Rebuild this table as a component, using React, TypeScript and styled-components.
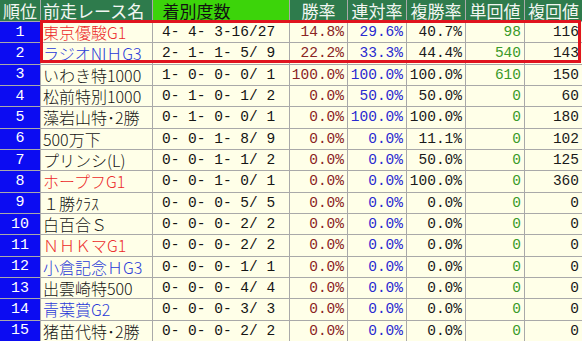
import React from "react";
import styled, { createGlobalStyle } from "styled-components";

const Global = createGlobalStyle`
  html, body { margin: 0; padding: 0; background: #ffffff; }
  #root { width: 582px; }
`;

const NUM_FONT = `"Liberation Mono", "Noto Sans CJK JP", monospace`;
const JP_FONT = `"Noto Sans CJK JP", "Noto Sans", sans-serif`;

const Wrap = styled.div`
  position: relative;
  width: 582px;
  height: 341px;
  overflow: hidden;
`;

const Table = styled.div`
  display: grid;
  grid-template-columns: 40px 111px 136px 57px 58px 58px 58px 57px;
  grid-template-rows: 21px repeat(15, 1fr);
  gap: 1px;
  width: 582px;
  height: 341px;
  background: #a9a9a9;
`;

type HeadTone = "dark" | "bright";

const HeadCell = styled.div<{ $tone: HeadTone; $align: "left" | "center" }>`
  display: flex;
  align-items: center;
  justify-content: ${(p) => (p.$align === "left" ? "flex-start" : "center")};
  padding-left: ${(p) => (p.$align === "left" ? "2px" : "0")};
  background: ${(p) => (p.$tone === "bright" ? "#3cd40a" : "#2e7b4c")};
  color: ${(p) => (p.$tone === "bright" ? "#111111" : "#f2f6f2")};
  font-family: ${JP_FONT};
  font-size: 17px;
  line-height: 20px;
  white-space: pre;
  overflow: hidden;
`;

const RankCell = styled.div`
  display: flex;
  align-items: center;
  justify-content: center;
  background: #0c0cf2;
  color: #ffffff;
  font-family: ${NUM_FONT};
  font-size: 15px;
  line-height: 1;
`;

const BodyCell = styled.div`
  display: flex;
  align-items: center;
  background: #ffffe8;
  white-space: pre;
  line-height: 1;
  overflow: hidden;
`;

type NameTone = "plain" | "red" | "blue";
const nameColors: Record<NameTone, string> = {
  plain: "#151515",
  red: "#ec2a2a",
  blue: "#2a3ad8",
};

const NameCell = styled(BodyCell)<{ $tone: NameTone }>`
  padding-left: 2px;
  color: ${(p) => nameColors[p.$tone]};
  font-family: ${JP_FONT};
  font-size: 16px;
  font-weight: 300;
`;

const RecordCell = styled(BodyCell)`
  padding-left: 9px;
  color: #151515;
  font-family: ${NUM_FONT};
  font-size: 14.5px;
`;

type NumTone = "maroon" | "blue" | "black" | "green";
const numColors: Record<NumTone, string> = {
  maroon: "#8a2424",
  blue: "#2a2ad0",
  black: "#1a1a1a",
  green: "#3a9a2a",
};

const NumCell = styled(BodyCell)<{ $tone: NumTone }>`
  justify-content: flex-end;
  padding-right: 3px;
  color: ${(p) => numColors[p.$tone]};
  font-family: ${NUM_FONT};
  font-size: 14.5px;
`;

const Highlight = styled.div`
  position: absolute;
  top: 20px;
  left: 40px;
  right: 1px;
  height: 43px;
  box-sizing: border-box;
  border: 3px solid #e0141e;
  pointer-events: none;
`;

type Row = {
  name: string;
  tone: NameTone;
  rec: string;
  win: string;
  ren: string;
  fuku: string;
  tan: string;
  fk: string;
};

const rows: Row[] = [
  { name: "東京優駿G1", tone: "red", rec: "4- 4- 3-16/27", win: "14.8%", ren: "29.6%", fuku: "40.7%", tan: "98", fk: "116" },
  { name: "ラジオNIＨG3", tone: "blue", rec: "2- 1- 1- 5/ 9", win: "22.2%", ren: "33.3%", fuku: "44.4%", tan: "540", fk: "143" },
  { name: "いわき特1000", tone: "plain", rec: "1- 0- 0- 0/ 1", win: "100.0%", ren: "100.0%", fuku: "100.0%", tan: "610", fk: "150" },
  { name: "松前特別1000", tone: "plain", rec: "0- 1- 0- 1/ 2", win: "0.0%", ren: "50.0%", fuku: "50.0%", tan: "0", fk: "60" },
  { name: "藻岩山特･2勝", tone: "plain", rec: "0- 1- 0- 0/ 1", win: "0.0%", ren: "100.0%", fuku: "100.0%", tan: "0", fk: "180" },
  { name: "500万下", tone: "plain", rec: "0- 0- 1- 8/ 9", win: "0.0%", ren: "0.0%", fuku: "11.1%", tan: "0", fk: "102" },
  { name: "プリンシ(L)", tone: "plain", rec: "0- 0- 1- 1/ 2", win: "0.0%", ren: "0.0%", fuku: "50.0%", tan: "0", fk: "125" },
  { name: "ホープフG1", tone: "red", rec: "0- 0- 1- 0/ 1", win: "0.0%", ren: "0.0%", fuku: "100.0%", tan: "0", fk: "360" },
  { name: "１勝ｸﾗｽ", tone: "plain", rec: "0- 0- 0- 5/ 5", win: "0.0%", ren: "0.0%", fuku: "0.0%", tan: "0", fk: "0" },
  { name: "白百合Ｓ", tone: "plain", rec: "0- 0- 0- 2/ 2", win: "0.0%", ren: "0.0%", fuku: "0.0%", tan: "0", fk: "0" },
  { name: "ＮＨＫマG1", tone: "red", rec: "0- 0- 0- 2/ 2", win: "0.0%", ren: "0.0%", fuku: "0.0%", tan: "0", fk: "0" },
  { name: "小倉記念ＨG3", tone: "blue", rec: "0- 0- 0- 1/ 1", win: "0.0%", ren: "0.0%", fuku: "0.0%", tan: "0", fk: "0" },
  { name: "出雲崎特500", tone: "plain", rec: "0- 0- 0- 4/ 4", win: "0.0%", ren: "0.0%", fuku: "0.0%", tan: "0", fk: "0" },
  { name: "青葉賞G2", tone: "blue", rec: "0- 0- 0- 3/ 3", win: "0.0%", ren: "0.0%", fuku: "0.0%", tan: "0", fk: "0" },
  { name: "猪苗代特･2勝", tone: "plain", rec: "0- 0- 0- 2/ 2", win: "0.0%", ren: "0.0%", fuku: "0.0%", tan: "0", fk: "0" },
];

const headers: { label: string; tone: HeadTone; align: "left" | "center" }[] = [
  { label: "順位", tone: "dark", align: "center" },
  { label: "前走レース名", tone: "dark", align: "left" },
  { label: "  着別度数", tone: "bright", align: "left" },
  { label: "勝率", tone: "dark", align: "center" },
  { label: "連対率", tone: "dark", align: "center" },
  { label: "複勝率", tone: "dark", align: "center" },
  { label: "単回値", tone: "dark", align: "center" },
  { label: "複回値", tone: "dark", align: "center" },
];

export default function App() {
  return (
    <>
      <Global />
      <Wrap>
        <Table>
          {headers.map((h) => (
            <HeadCell key={h.label} $tone={h.tone} $align={h.align}>
              {h.label}
            </HeadCell>
          ))}
          {rows.map((r, i) => (
            <React.Fragment key={i}>
              <RankCell>{i + 1}</RankCell>
              <NameCell $tone={r.tone}>{r.name}</NameCell>
              <RecordCell>{r.rec}</RecordCell>
              <NumCell $tone="maroon">{r.win}</NumCell>
              <NumCell $tone="blue">{r.ren}</NumCell>
              <NumCell $tone="black">{r.fuku}</NumCell>
              <NumCell $tone="green">{r.tan}</NumCell>
              <NumCell $tone="black">{r.fk}</NumCell>
            </React.Fragment>
          ))}
        </Table>
        <Highlight />
      </Wrap>
    </>
  );
}
